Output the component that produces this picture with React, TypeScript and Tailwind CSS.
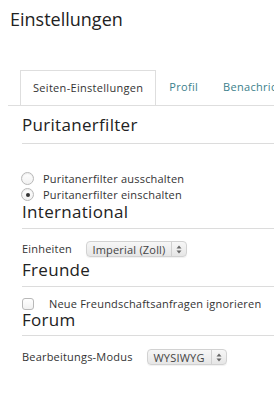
import React from "react";

const font = { fontFamily: '"Open Sans", "DejaVu Sans", sans-serif' };

function Radio({ checked }: { checked?: boolean }) {
  return (
    <span className="flex h-[13px] w-[13px] shrink-0 items-center justify-center rounded-full border border-[#b8b8b8] bg-gradient-to-b from-white to-[#f1f1f1] shadow-[inset_0_1px_1px_rgba(0,0,0,0.08)]">
      {checked && <span className="h-[4px] w-[4px] rounded-full bg-[#333]" />}
    </span>
  );
}

function Select({ label, w }: { label: string; w: string }) {
  return (
    <span
      className={`flex h-[16px] shrink-0 items-center rounded-[4px] border border-[#d2d2d2] bg-gradient-to-b from-[#f7f7f7] to-[#e6e6e6] shadow-[0_1px_1px_rgba(0,0,0,0.06)] ${w}`}
    >
      <span className="flex-1 text-center text-[11px] leading-none tracking-[0.2px] text-[#444]">{label}</span>
      <span className="flex h-full w-[15px] flex-col items-center justify-center border-l border-[#d0d0d0]">
        <svg width="6" height="9" viewBox="0 0 6 9">
          <path d="M3 0.5 L5.5 3.5 L0.5 3.5 Z" fill="#666" />
          <path d="M3 8.5 L5.5 5.5 L0.5 5.5 Z" fill="#666" />
        </svg>
      </span>
    </span>
  );
}

function SectionTitle({ children, className = "" }: { children: React.ReactNode; className?: string }) {
  return (
    <div className={`border-b border-[#dcdcdc] text-[17px] leading-[20px] tracking-[0.3px] text-[#222] ${className}`}>
      {children}
    </div>
  );
}

export default function App() {
  return (
    <div className="h-[395px] w-[274px] overflow-hidden bg-white text-[#333]" style={font}>
      <h1 className="pl-[10px] pt-[7px] text-[18px] leading-[24px] text-[#222]">Einstellungen</h1>

      <div className="ml-[8px] mt-[39px] flex overflow-hidden border-b border-[#dedede] pl-[12px]">
        <div className="mb-[-1px] flex h-[36px] shrink-0 items-center whitespace-nowrap border border-b-white border-[#dedede] bg-white px-[12px] text-[11px] tracking-[0.3px] text-[#333]">
          Seiten-Einstellungen
        </div>
        <div className="flex h-[35px] shrink-0 items-center whitespace-nowrap pl-[13px] text-[11px] tracking-[0.3px] text-[#3c7f8c]">
          Profil
        </div>
        <div className="flex h-[35px] shrink-0 items-center whitespace-nowrap pl-[25px] text-[11px] tracking-[0.3px] text-[#3c7f8c]">
          Benachrichtigungen
        </div>
      </div>

      <div className="pl-[22px]">
        <SectionTitle className="pt-[9px] pb-[8px]">Puritanerfilter</SectionTitle>
        <div className="mt-[28px] flex flex-col gap-[3px] text-[11px] leading-[13px] tracking-[0.2px]">
          <label className="-ml-[1px] flex items-center gap-[9px]">
            <Radio />
            <span>Puritanerfilter ausschalten</span>
          </label>
          <label className="-ml-[1px] flex items-center gap-[9px]">
            <Radio checked />
            <span>Puritanerfilter einschalten</span>
          </label>
        </div>
        <SectionTitle className="pt-[1px] pb-[6px]">International</SectionTitle>
        <div className="mt-[12px] flex items-center gap-[14px] text-[11px] leading-[14px] tracking-[0.2px]">
          <span>Einheiten</span>
          <Select label="Imperial (Zoll)" w="w-[101px]" />
        </div>
        <SectionTitle className="pt-[3px] pb-[6px]">Freunde</SectionTitle>
        <label className="mt-[10px] flex items-center gap-[15px] text-[11px] leading-[13px] tracking-[0.2px]">
          <span className="h-[12px] w-[12px] shrink-0 rounded-[3px] border border-[#b8b8b8] bg-gradient-to-b from-white to-[#f1f1f1]" />
          <span className="whitespace-nowrap">Neue Freundschaftsanfragen ignorieren</span>
        </label>
        <SectionTitle className="pb-[5px]">Forum</SectionTitle>
        <div className="mt-[13px] flex items-center gap-[14px] text-[11px] leading-[14px] tracking-[0.2px]">
          <span>Bearbeitungs-Modus</span>
          <Select label="WYSIWYG" w="w-[80px]" />
        </div>
      </div>
    </div>
  );
}
